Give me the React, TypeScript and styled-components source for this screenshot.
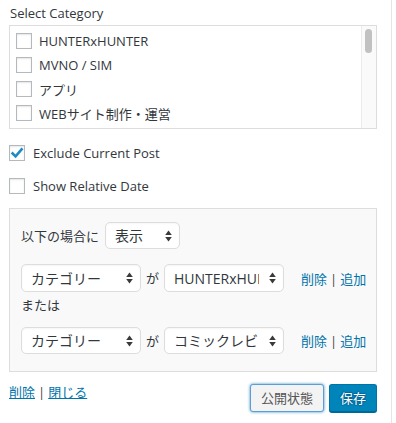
import { useEffect, useRef, useState } from "react";
import styled, { createGlobalStyle } from "styled-components";

const GlobalStyle = createGlobalStyle`
  html, body {
    margin: 0;
    padding: 0;
    background: #fff;
  }
  body {
    font-family: "Open Sans", "Noto Sans CJK JP", sans-serif;
    font-size: 13px;
    color: #444;
  }
  * {
    box-sizing: border-box;
  }
`;

const Panel = styled.div`
  width: 392px;
  min-height: 423px;
  border-right: 1px solid #e5e5e5;
  padding: 4px 14px 0 9px;
`;

const Heading = styled.div`
  line-height: 18px;
  padding-left: 1px;
  margin-bottom: 3px;
  color: #32373c;
`;

const CategoryBox = styled.div`
  display: flex;
  height: 104px;
  border: 1px solid #dddddd;
  background: #fff;
`;

const CategoryList = styled.div`
  flex: 1;
  overflow-y: auto;
  padding-top: 3px;
  scrollbar-width: none;

  &::-webkit-scrollbar {
    display: none;
  }
`;

const ScrollTrack = styled.div`
  flex: none;
  width: 15px;
  background: #fafafa;
  border-left: 1px solid #ececec;
  padding: 3px 4px 3px 3px;
`;

const ScrollThumb = styled.div`
  width: 7px;
  border-radius: 4px;
  background: #c1c1c1;
`;

const CategoryRow = styled.label`
  display: flex;
  align-items: center;
  gap: 7px;
  height: 24px;
  padding-left: 6px;
  color: #32373c;
  white-space: nowrap;
`;

const OptionRow = styled.label<{ $first?: boolean }>`
  display: flex;
  align-items: center;
  gap: 8px;
  height: 33px;
  margin-top: ${(p) => (p.$first ? "7px" : "0")};
  color: #32373c;
`;

const Box = styled.span`
  position: relative;
  display: inline-flex;
  align-items: center;
  justify-content: center;
  flex: none;
  width: 16px;
  height: 16px;
  border: 1px solid #b4b9be;
  background: #fff;
  box-shadow: inset 0 1px 2px rgba(0, 0, 0, 0.1);
  cursor: pointer;
`;

const HiddenInput = styled.input`
  position: absolute;
  inset: 0;
  opacity: 0;
  width: 100%;
  height: 100%;
  margin: 0;
  cursor: pointer;
`;

const Rules = styled.div`
  margin-top: 6px;
  border: 1px solid #dddddd;
  background: #f9f9f9;
  padding: 13px 11px 17px;
`;

const RuleRow = styled.div<{ $gap?: number }>`
  display: flex;
  align-items: center;
  margin-top: ${(p) => p.$gap ?? 0}px;
`;

const RuleText = styled.span`
  color: #32373c;
  line-height: 18px;
  margin-right: 6px;
`;

const Or = styled.div`
  margin-top: 4px;
  line-height: 18px;
  color: #32373c;
`;

const SelectWrap = styled.span<{ $width: number; $height: number }>`
  position: relative;
  display: inline-block;
  flex: none;
  width: ${(p) => p.$width}px;
  height: ${(p) => p.$height}px;
`;

const NativeSelect = styled.select`
  appearance: none;
  -webkit-appearance: none;
  width: 100%;
  height: 100%;
  margin: 0;
  border: 1px solid #dddddd;
  border-radius: 5px;
  background: #fff;
  box-shadow: inset 0 1px 2px rgba(0, 0, 0, 0.04);
  padding: 0 24px 0 9px;
  font-family: "Open Sans", "Noto Sans CJK JP", sans-serif;
  font-size: 14px;
  color: #32373c;
  outline: none;
`;

const Arrows = styled.svg`
  position: absolute;
  right: 8px;
  top: 50%;
  margin-top: -6px;
  pointer-events: none;
`;

const Ga = styled.span`
  margin: 0 5px;
  color: #32373c;
  line-height: 18px;
`;

const Actions = styled.span`
  margin-left: 17px;
  white-space: nowrap;
`;

const Link = styled.a<{ $underline?: boolean }>`
  color: #0073aa;
  text-decoration: ${(p) => (p.$underline ? "underline" : "none")};
  cursor: pointer;
`;

const Sep = styled.span`
  margin: 0 3px;
  color: #444;
`;

const Footer = styled.div`
  display: flex;
  justify-content: space-between;
  align-items: flex-start;
  margin-top: 12px;
`;

const FooterLinks = styled.div`
  margin-top: -1px;
  line-height: 18px;
`;

const Buttons = styled.div`
  display: flex;
  gap: 5px;
`;

const Button = styled.button<{ $primary?: boolean }>`
  height: 28px;
  padding: 0 10px;
  border-radius: 3px;
  font-family: "Open Sans", "Noto Sans CJK JP", sans-serif;
  font-size: 13px;
  line-height: 26px;
  cursor: pointer;
  border: 1px solid ${(p) => (p.$primary ? "#0073aa" : "#5b9dd9")};
  border-bottom-color: ${(p) => (p.$primary ? "#006799" : "#5b9dd9")};
  background: ${(p) => (p.$primary ? "#0085ba" : "#f3f3f3")};
  color: ${(p) => (p.$primary ? "#fff" : "#555")};
  box-shadow: ${(p) =>
    p.$primary ? "0 1px 0 #006799" : "0 0 3px rgba(0, 115, 170, 0.8)"};
  text-shadow: ${(p) =>
    p.$primary
      ? "0 -1px 1px #006799, 1px 0 1px #006799, 0 1px 1px #006799, -1px 0 1px #006799"
      : "none"};
`;

const categories = [
  "HUNTERxHUNTER",
  "MVNO / SIM",
  "アプリ",
  "WEBサイト制作・運営",
  "ガジェット",
  "コミックレビュー",
  "スマートフォン",
  "セキュリティ",
  "ソフトウェア",
  "タブレット",
  "ニュース",
  "パソコン",
  "ブログ運営",
  "プログラミング",
  "レビュー",
  "雑記",
  "未分類",
];

function Checkbox({
  checked,
  onChange,
}: {
  checked: boolean;
  onChange: () => void;
}) {
  return (
    <Box>
      <HiddenInput type="checkbox" checked={checked} onChange={onChange} />
      {checked && (
        <svg width="14" height="14" viewBox="0 0 14 14">
          <path
            d="M2.6 7.4 L5.6 10.4 L11.6 3.4"
            fill="none"
            stroke="#1e8cbe"
            strokeWidth="2.6"
            strokeLinecap="square"
          />
        </svg>
      )}
    </Box>
  );
}

function Select({
  width,
  height,
  value,
  options,
}: {
  width: number;
  height: number;
  value: string;
  options: string[];
}) {
  const [current, setCurrent] = useState(value);
  return (
    <SelectWrap $width={width} $height={height}>
      <NativeSelect value={current} onChange={(e) => setCurrent(e.target.value)}>
        {options.map((o) => (
          <option key={o} value={o}>
            {o}
          </option>
        ))}
      </NativeSelect>
      <Arrows width="7" height="12" viewBox="0 0 7 12">
        <path d="M3.5 0.5 L6.8 5 L0.2 5 Z" fill="#3a3a3a" />
        <path d="M3.5 11.5 L6.8 7 L0.2 7 Z" fill="#3a3a3a" />
      </Arrows>
    </SelectWrap>
  );
}

function CategoryChecklist() {
  const [picked, setPicked] = useState<Record<string, boolean>>({});
  const [thumb, setThumb] = useState({ top: 0, height: 24 });
  const listRef = useRef<HTMLDivElement>(null);

  function measure() {
    const el = listRef.current;
    if (!el) return;
    const track = el.clientHeight - 6;
    const ratio = el.clientHeight / el.scrollHeight;
    const height = Math.max(20, Math.round(track * ratio));
    const max = el.scrollHeight - el.clientHeight;
    const top = max > 0 ? Math.round((el.scrollTop / max) * (track - height)) : 0;
    setThumb({ top, height });
  }

  useEffect(measure, []);

  return (
    <CategoryBox>
      <CategoryList ref={listRef} onScroll={measure}>
        {categories.map((c) => (
          <CategoryRow key={c}>
            <Checkbox
              checked={!!picked[c]}
              onChange={() => setPicked((p) => ({ ...p, [c]: !p[c] }))}
            />
            {c}
          </CategoryRow>
        ))}
      </CategoryList>
      <ScrollTrack>
        <ScrollThumb style={{ marginTop: thumb.top, height: thumb.height }} />
      </ScrollTrack>
    </CategoryBox>
  );
}

export default function App() {
  const [exclude, setExclude] = useState(true);
  const [relative, setRelative] = useState(false);

  const ruleTypes = ["カテゴリー", "タグ", "投稿タイプ", "ページ"];

  return (
    <>
      <GlobalStyle />
      <Panel>
        <Heading>Select Category</Heading>
        <CategoryChecklist />

        <OptionRow $first>
          <Checkbox checked={exclude} onChange={() => setExclude((v) => !v)} />
          Exclude Current Post
        </OptionRow>
        <OptionRow>
          <Checkbox checked={relative} onChange={() => setRelative((v) => !v)} />
          Show Relative Date
        </OptionRow>

        <Rules>
          <RuleRow>
            <RuleText>以下の場合に</RuleText>
            <Select width={75} height={27} value="表示" options={["表示", "非表示"]} />
          </RuleRow>

          <RuleRow $gap={15}>
            <Select width={120} height={28} value="カテゴリー" options={ruleTypes} />
            <Ga>が</Ga>
            <Select
              width={120}
              height={28}
              value="HUNTERxHUNTER"
              options={categories}
            />
            <Actions>
              <Link>削除</Link>
              <Sep>|</Sep>
              <Link>追加</Link>
            </Actions>
          </RuleRow>

          <Or>または</Or>

          <RuleRow $gap={13}>
            <Select width={120} height={27} value="カテゴリー" options={ruleTypes} />
            <Ga>が</Ga>
            <Select
              width={120}
              height={27}
              value="コミックレビュー"
              options={categories}
            />
            <Actions>
              <Link>削除</Link>
              <Sep>|</Sep>
              <Link>追加</Link>
            </Actions>
          </RuleRow>
        </Rules>

        <Footer>
          <FooterLinks>
            <Link $underline>削除</Link>
            <Sep>|</Sep>
            <Link $underline>閉じる</Link>
          </FooterLinks>
          <Buttons>
            <Button>公開状態</Button>
            <Button $primary>保存</Button>
          </Buttons>
        </Footer>
      </Panel>
    </>
  );
}
